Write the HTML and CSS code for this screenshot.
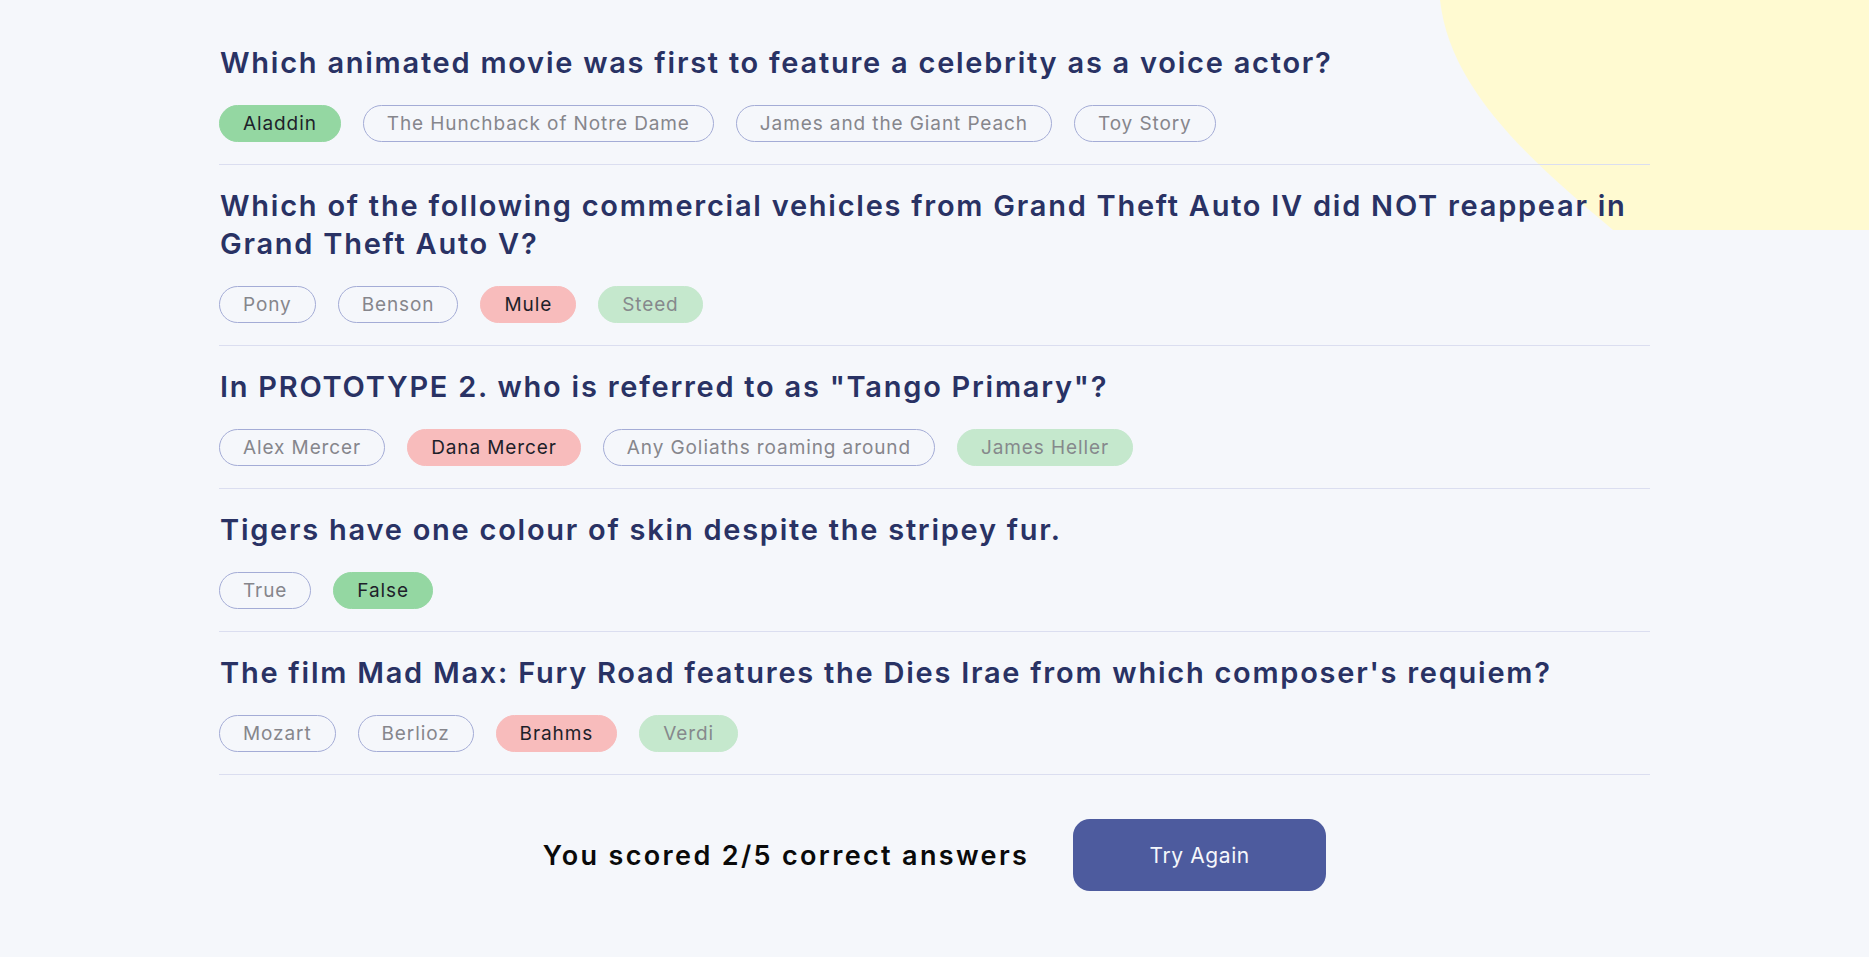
FILE: index.html
```html
<!DOCTYPE html>
<html lang="en">
<head>
<meta charset="utf-8">
<title>Quizzical</title>
<link rel="stylesheet" href="styles.css">
</head>
<body>
<svg class="blob" width="430" height="231" viewBox="1439 0 430 231" aria-hidden="true">
  <path d="M1440,0 C1450,90 1530,160 1613,230 L1869,230 L1869,0 Z" fill="#FFFAD1"/>
</svg>
<main class="quiz">
  <section class="question">
    <h2 class="q-title">Which animated movie was first to feature a celebrity as a voice actor?</h2>
    <div class="answers">
      <span class="ans correct-picked">Aladdin</span>
      <span class="ans">The Hunchback of Notre Dame</span>
      <span class="ans">James and the Giant Peach</span>
      <span class="ans">Toy Story</span>
    </div>
  </section>
  <section class="question">
    <h2 class="q-title">Which of the following commercial vehicles from Grand Theft Auto IV did NOT reappear in Grand Theft Auto V?</h2>
    <div class="answers">
      <span class="ans">Pony</span>
      <span class="ans">Benson</span>
      <span class="ans wrong">Mule</span>
      <span class="ans correct">Steed</span>
    </div>
  </section>
  <section class="question">
    <h2 class="q-title">In PROTOTYPE 2. who is referred to as "Tango Primary"?</h2>
    <div class="answers">
      <span class="ans">Alex Mercer</span>
      <span class="ans wrong">Dana Mercer</span>
      <span class="ans">Any Goliaths roaming around</span>
      <span class="ans correct">James Heller</span>
    </div>
  </section>
  <section class="question">
    <h2 class="q-title">Tigers have one colour of skin despite the stripey fur.</h2>
    <div class="answers">
      <span class="ans">True</span>
      <span class="ans correct-picked">False</span>
    </div>
  </section>
  <section class="question">
    <h2 class="q-title">The film Mad Max: Fury Road features the Dies Irae from which composer's requiem?</h2>
    <div class="answers">
      <span class="ans">Mozart</span>
      <span class="ans">Berlioz</span>
      <span class="ans wrong">Brahms</span>
      <span class="ans correct">Verdi</span>
    </div>
  </section>
  <div class="result">
    <p class="score">You scored 2/5 correct answers</p>
    <button class="again">Try Again</button>
  </div>
</main>
</body>
</html>
```
FILE: styles.css
```css
html, body {
  margin: 0;
  padding: 0;
}
body {
  background: #F5F7FB;
  min-height: 957px;
  font-family: Inter, "Noto Sans", sans-serif;
  overflow: hidden;
}
.blob {
  position: absolute;
  top: 0;
  right: 0;
}
.quiz {
  position: relative;
  width: 1431px;
  margin: 0 auto;
  padding-top: 21px;
}
.question {
  padding: 23px 0 22px;
  border-bottom: 1px solid #DBDEF0;
}
.q-title {
  margin: 0 0 23px;
  padding-left: 1px;
  font-size: 29px;
  line-height: 38px;
  font-weight: 600;
  color: #293264;
  letter-spacing: 1.75px;
}
.answers {
  display: flex;
  gap: 22px;
}
.ans {
  box-sizing: border-box;
  height: 37px;
  display: inline-flex;
  align-items: center;
  padding: 0 23px;
  border: 1px solid #A4ACD6;
  border-radius: 19px;
  font-size: 19px;
  letter-spacing: 0.9px;
  color: #86868C;
}
.correct-picked {
  background: #94D7A2;
  border-color: #94D7A2;
  color: #1E1F2A;
}
.wrong {
  background: #F8BCBC;
  border-color: #F8BCBC;
  color: #1E1F2A;
}
.correct {
  background: #C5E8CD;
  border-color: #C5E8CD;
  color: #86898C;
}
.result {
  display: flex;
  align-items: center;
  justify-content: center;
  gap: 44px;
  margin-top: 44px;
}
.question + .question {
  padding-top: 22px;
}
.score {
  margin: 0;
  font-size: 27px;
  font-weight: 600;
  color: #0A0A0A;
  letter-spacing: 2.35px;
}
.again {
  width: 253px;
  height: 72px;
  border: none;
  border-radius: 17px;
  background: #4D5B9E;
  color: #F5F7FB;
  font-family: Inter, "Noto Sans", sans-serif;
  font-size: 21px;
  letter-spacing: 0.6px;
}
```
